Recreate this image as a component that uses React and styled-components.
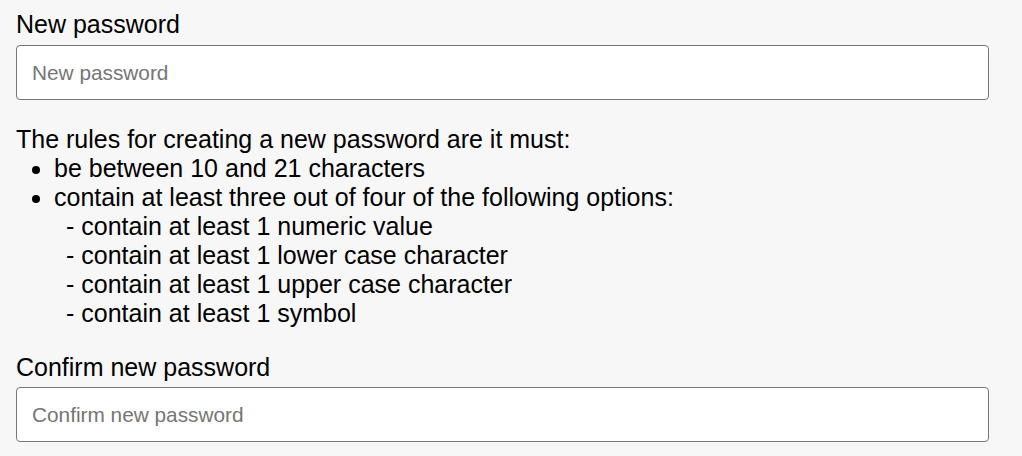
import React from 'react';
import styled, { createGlobalStyle } from 'styled-components';

const GlobalStyle = createGlobalStyle`
  html, body {
    margin: 0;
    padding: 0;
    background: #f7f7f7;
  }
  body {
    font-family: "Liberation Sans", Arial, sans-serif;
    color: #000;
  }
`;

const rules = [
  'contain at least 1 numeric value',
  'contain at least 1 lower case character',
  'contain at least 1 upper case character',
  'contain at least 1 symbol',
];

function App() {
  return (
    <>
      <GlobalStyle />
      <Form>
        <Field>
          <Label htmlFor="new-password">New password</Label>
          <Input id="new-password" type="password" placeholder="New password" />
        </Field>

        <Rules>
          <RulesIntro>The rules for creating a new password are it must:</RulesIntro>
          <BulletList>
            <li>be between 10 and 21 characters</li>
            <li>
              contain at least three out of four of the following options:
              <OptionList>
                {rules.map((rule) => (
                  <li key={rule}>- {rule}</li>
                ))}
              </OptionList>
            </li>
          </BulletList>
        </Rules>

        <Field $tight>
          <Label htmlFor="confirm-password">Confirm new password</Label>
          <Input id="confirm-password" type="password" placeholder="Confirm new password" />
        </Field>
      </Form>
    </>
  );
}

export default App;

const Form = styled.div`
  padding: 10px 33px 0 16px;
  display: flex;
  flex-direction: column;
  gap: 25px;
`;

const Field = styled.div`
  display: flex;
  flex-direction: column;
  gap: ${(p) => (p.$tight ? '5px' : '6px')};
`;

const Label = styled.label`
  font-size: 25px;
  line-height: 29px;
`;

const Input = styled.input`
  box-sizing: border-box;
  width: 100%;
  height: 55px;
  padding: 0 15px;
  border: 1px solid #767676;
  border-radius: 4px;
  background: #fff;
  font-family: "Liberation Sans", Arial, sans-serif;
  font-size: 20.8px;
  color: #000;
  outline: none;

  &::placeholder {
    color: #757575;
  }
`;

const Rules = styled.div`
  font-size: 25px;
  line-height: 29px;
`;

const RulesIntro = styled.div``;

const BulletList = styled.ul`
  margin: 0;
  padding-left: 38px;
  list-style: disc;
`;

const OptionList = styled.ul`
  margin: 0;
  padding-left: 12px;
  list-style: none;
`;
